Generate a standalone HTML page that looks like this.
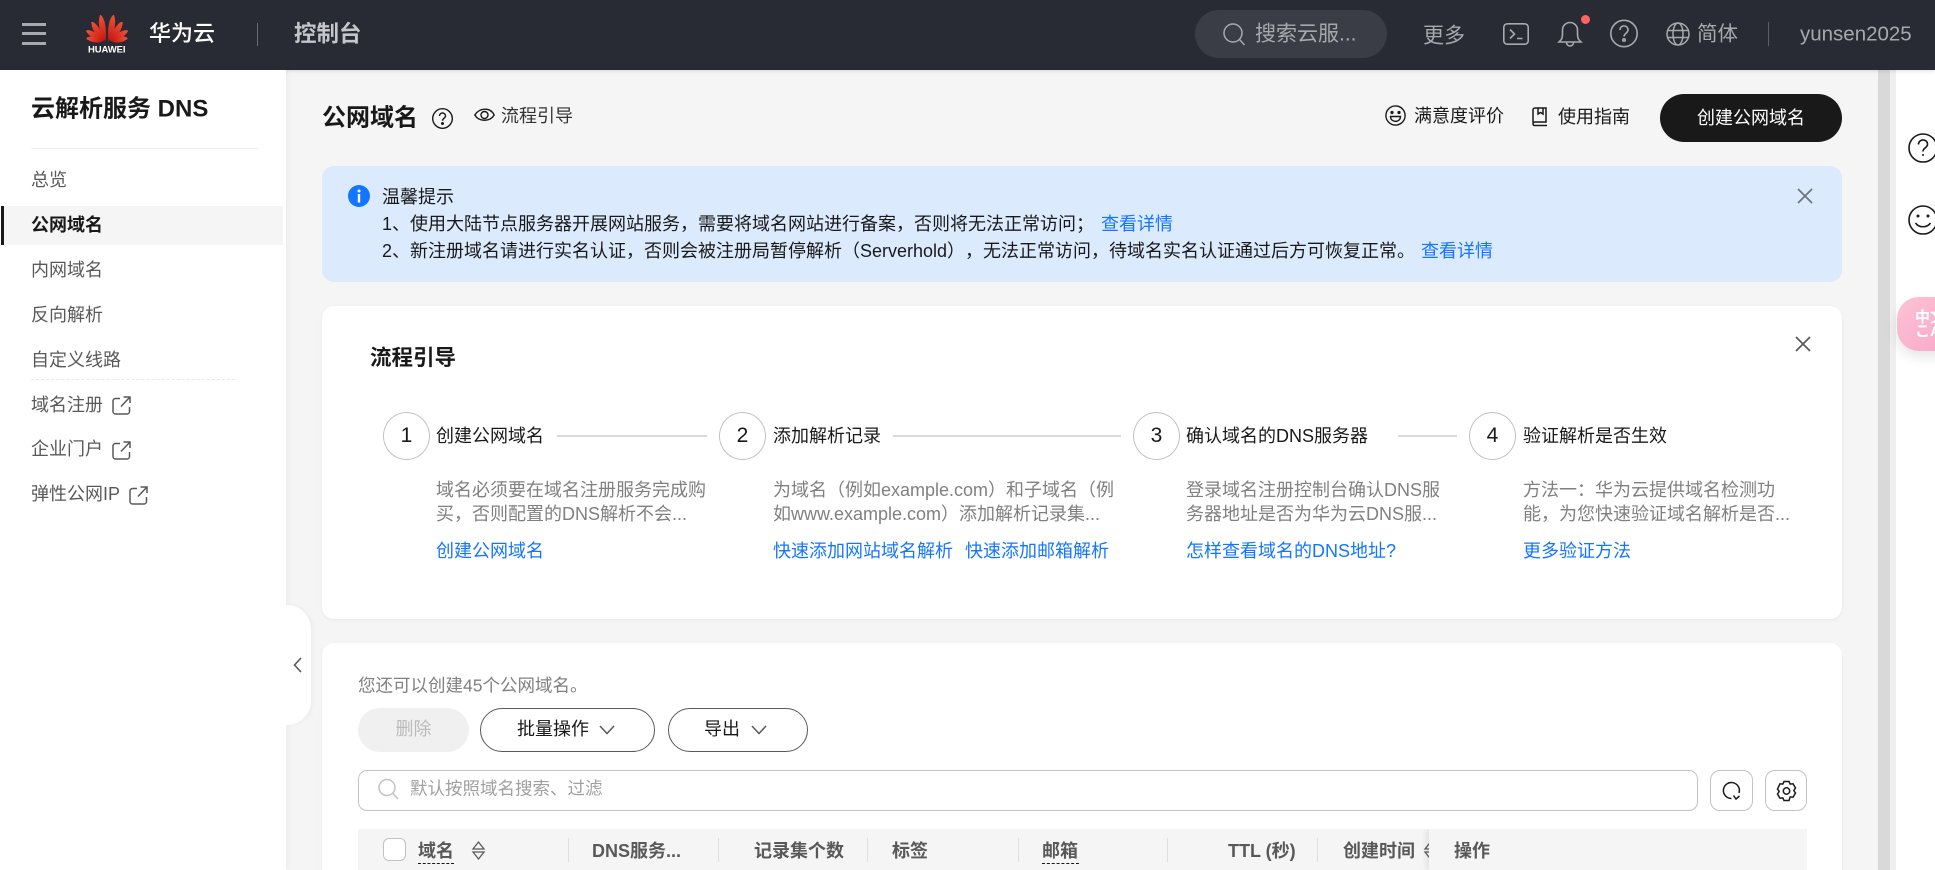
<!DOCTYPE html>
<html lang="zh-CN">
<head>
<meta charset="utf-8">
<title>公网域名</title>
<style>
html,body{margin:0;padding:0;width:1935px;height:870px;overflow:hidden;background:#f5f5f5}
body{position:relative;font-family:"Liberation Sans","Noto Sans CJK SC",sans-serif;color:#191919;font-size:18px;text-spacing-trim:space-all}
.b{position:absolute;box-sizing:border-box}
.t{position:absolute;white-space:nowrap;line-height:1.2;transform:translateY(-50%)}
.g{color:#595959}
.lk{color:#1476ff}
.d{color:#808080}
.bd{font-weight:700}
.hd{color:#595959;font-weight:700;font-size:18px}
svg{position:absolute;overflow:visible;fill:none}
.sep{position:absolute;top:838px;width:1px;height:24px;background:#dfdfdf}
.ln{position:absolute;top:435px;height:2px;background:#d9d9d9}
.c{position:absolute;top:412px;width:47px;height:48px;border:1px solid #c2c2c2;border-radius:50%;box-sizing:border-box;background:#fff;text-align:center;line-height:46px;font-size:21px;color:#191919}
</style>
</head>
<body>

<!-- main scrollbar + right rail -->
<div class="b" style="left:1878px;top:70px;width:12px;height:800px;background:#d9d9d9"></div>
<div class="b" style="left:1890px;top:70px;width:6px;height:800px;background:#efefef"></div>
<div class="b" style="left:1896px;top:70px;width:39px;height:800px;background:#fff"></div>
<svg style="left:1908px;top:133px" width="30" height="30" viewBox="0 0 30 30" stroke="#191919" stroke-width="1.6"><circle cx="15" cy="15" r="14"/><path d="M10.5 11.5c0-6 9-6 9 -.2 0 3.6-4.5 3.6-4.5 7.2"/><circle cx="15" cy="22" r="1" fill="#191919" stroke="none"/></svg>
<svg style="left:1908px;top:205px" width="30" height="30" viewBox="0 0 30 30" stroke="#191919" stroke-width="1.6"><circle cx="15" cy="15" r="14"/><circle cx="10" cy="11" r="1.5" fill="#191919" stroke="none"/><circle cx="20" cy="11" r="1.5" fill="#191919" stroke="none"/><path d="M7.5 18c3.5 5 11.500 5 15 0"/></svg>
<div class="b" style="left:1897px;top:297px;width:50px;height:54px;border-radius:22px 0 0 22px;background:linear-gradient(135deg,#fcc3d6,#f9a9c7);box-shadow:0 6px 12px rgba(0,0,0,.1);overflow:hidden">
  <div style="position:absolute;left:18px;top:14px;color:#fff;font-size:15px;line-height:14px;font-weight:700;white-space:nowrap">中文<br>こA</div>
</div>

<!-- header -->
<div class="b" style="left:0;top:0;width:1935px;height:70px;background:#282b33;box-shadow:0 1px 4px rgba(0,0,0,.12)"></div>
<div class="b" style="left:22px;top:23px;width:24px;height:3px;background:#a7a9ae"></div>
<div class="b" style="left:22px;top:32px;width:24px;height:3px;background:#a7a9ae"></div>
<div class="b" style="left:22px;top:42px;width:24px;height:3px;background:#a7a9ae"></div>
<svg style="left:88px;top:13px" width="38" height="30" viewBox="0 0 38 30">
  <defs><linearGradient id="p" x1="0" y1="0" x2="0" y2="1"><stop offset="0" stop-color="#f0523a"/><stop offset="1" stop-color="#c4160e"/></linearGradient></defs>
  <g fill="url(#p)">
    <path transform="translate(17.700 28) rotate(-9)" d="M0 0C-5-6-5.500-20-1.500-26.500 .5-27 4.500-18 0 0Z"/>
    <path transform="translate(20.300 28) rotate(9)" d="M0 0C-4.500-18-.5-27 1.500-26.500 5.500-20 5-6 0 0Z"/>
    <path transform="translate(16.500 28) rotate(-30)" d="M0 0C-5-5-5.500-16-2-23 .5-23.500 4-14 0 0Z"/>
    <path transform="translate(21.500 28) rotate(30)" d="M0 0C-4-14-.5-23.500 2-23 5.500-16 5-5 0 0Z"/>
    <path transform="translate(15.500 28) rotate(-52)" d="M0 0C-5-4-5.500-13-3-20 0-20.500 3.500-11 0 0Z"/>
    <path transform="translate(22.500 28) rotate(52)" d="M0 0C-3.500-11 0-20.500 3-20 5.500-13 5-4 0 0Z"/>
    <path transform="translate(14.500 28) rotate(-72)" d="M0 0C-4-3-5-10-3-16 0-16.500 3-9 0 0Z"/>
    <path transform="translate(23.500 28) rotate(72)" d="M0 0C-3-9 0-16.500 3-16 5-10 4-3 0 0Z"/>
  </g>
</svg>
<div class="t" style="left:88px;top:50px;color:#fff;font-size:9.500px;font-weight:700;letter-spacing:-.1px">HUAWEI</div>
<div class="t" style="left:149px;top:34px;color:#fff;font-size:22px;font-weight:500">华为云</div>
<div class="b" style="left:257px;top:23px;width:1px;height:23px;background:#6a6c73"></div>
<div class="t" style="left:294px;top:34px;color:#c4c6ca;font-size:22.500px;font-weight:700">控制台</div>

<div class="b" style="left:1195px;top:10px;width:192px;height:48px;border-radius:24px;background:#3a3d45"></div>
<svg style="left:1223px;top:23px" width="23" height="23" viewBox="0 0 23 23" stroke="#a7a9ae" stroke-width="1.500"><circle cx="10" cy="10" r="9"/><path d="M16.500 16.500L21.500 22"/></svg>
<div class="t" style="left:1255px;top:34px;color:#a7a9ae;font-size:21px">搜索云服...</div>
<div class="t" style="left:1423px;top:36px;color:#a7a9ae;font-size:21px">更多</div>
<svg style="left:1503px;top:23px" width="26" height="22" viewBox="0 0 26 22" stroke="#a7a9ae" stroke-width="1.600"><rect x=".8" y=".8" width="24.400" height="20.400" rx="3.500"/><path d="M7 6.500l4.500 4.500L7 15.500M14 15.500h5.500"/></svg>
<svg style="left:1558px;top:20px" width="24" height="28" viewBox="0 0 24 28" stroke="#a7a9ae" stroke-width="1.600"><path d="M1 22h22c-2-2-3.500-3-3.500-8V10a7.500 7.500 0 0 0-15 0v4c0 5-1.500 6-3.500 8Z"/><path d="M8.500 22.500a3.500 3.500 0 0 0 7 0"/></svg>
<div class="b" style="left:1581px;top:15px;width:9px;height:9px;border-radius:50%;background:#ff6464"></div>
<svg style="left:1610px;top:19px" width="28" height="29" viewBox="0 0 28 29" stroke="#a7a9ae" stroke-width="1.600"><circle cx="14" cy="14.500" r="13.200"/><path d="M10 11c0-5.500 8-5.500 8 0 0 3.200-4 3.200-4 6.500"/><circle cx="14" cy="21" r="1.200"/></svg>
<svg style="left:1666px;top:22px" width="24" height="24" viewBox="0 0 24 24" stroke="#a7a9ae" stroke-width="1.500"><circle cx="12" cy="12" r="11"/><ellipse cx="12" cy="12" rx="5" ry="11"/><path d="M1.500 8.500h21M1.500 15.500h21"/></svg>
<div class="t" style="left:1697px;top:35px;color:#a7a9ae;font-size:20.500px">简体</div>
<div class="b" style="left:1768px;top:22px;width:1px;height:24px;background:#5c5e65"></div>
<div class="t" style="left:1800px;top:35px;color:#a7a9ae;font-size:20.500px">yunsen2025</div>

<!-- sidebar -->
<div class="b" style="left:0;top:70px;width:286px;height:800px;background:#fff;box-shadow:2px 0 6px rgba(0,0,0,.04)"></div>
<div class="t bd" style="left:31px;top:110px;font-size:24px">云解析服务 DNS</div>
<div class="b" style="left:31px;top:148px;width:228px;height:1px;background:#eeeeee"></div>
<div class="t g" style="left:31px;top:181px;font-size:18px">总览</div>
<div class="b" style="left:3px;top:206px;width:280px;height:39px;background:#f5f5f5"></div>
<div class="b" style="left:1px;top:206px;width:3px;height:39px;background:#191919"></div>
<div class="t bd" style="left:31px;top:226px;font-size:18px">公网域名</div>
<div class="t g" style="left:31px;top:271px;font-size:18px">内网域名</div>
<div class="t g" style="left:31px;top:316px;font-size:18px">反向解析</div>
<div class="t g" style="left:31px;top:361px;font-size:18px">自定义线路</div>
<div class="b" style="left:31px;top:379px;width:204px;height:0;border-top:1px dashed #e8e8e8"></div>
<div class="t g" style="left:31px;top:406px;font-size:18px">域名注册</div>
<svg style="left:112px;top:396px" width="19" height="19" viewBox="0 0 19 19" stroke="#595959" stroke-width="1.500"><path d="M8 2.500H3.500a2.500 2.500 0 0 0-2.500 2.500V15.500a2.500 2.500 0 0 0 2.500 2.500H15a2.500 2.500 0 0 0 2.500-2.500V11M9 10.500L17.500 1.500M11.500 1h6.500v6"/></svg>
<div class="t g" style="left:31px;top:450px;font-size:18px">企业门户</div>
<svg style="left:112px;top:441px" width="19" height="19" viewBox="0 0 19 19" stroke="#595959" stroke-width="1.500"><path d="M8 2.500H3.500a2.500 2.500 0 0 0-2.500 2.500V15.500a2.500 2.500 0 0 0 2.500 2.500H15a2.500 2.500 0 0 0 2.500-2.500V11M9 10.500L17.500 1.500M11.500 1h6.500v6"/></svg>
<div class="t g" style="left:31px;top:495px;font-size:18px">弹性公网IP</div>
<svg style="left:129px;top:486px" width="19" height="19" viewBox="0 0 19 19" stroke="#595959" stroke-width="1.500"><path d="M8 2.500H3.500a2.500 2.500 0 0 0-2.500 2.500V15.500a2.500 2.500 0 0 0 2.500 2.500H15a2.500 2.500 0 0 0 2.500-2.500V11M9 10.500L17.500 1.500M11.500 1h6.500v6"/></svg>

<!-- collapse tab -->
<div class="b" style="left:286px;top:605px;width:25px;height:120px;background:#fff;border-radius:0 24px 24px 0;box-shadow:2px 0 4px rgba(0,0,0,.04)"></div>
<svg style="left:293px;top:657px" width="9" height="16" viewBox="0 0 9 16" stroke="#595959" stroke-width="1.600"><path d="M8 1L1.500 8 8 15"/></svg>

<!-- title row -->
<div class="t bd" style="left:322px;top:119px;font-size:24px">公网域名</div>
<svg style="left:432px;top:108px" width="21" height="21" viewBox="0 0 21 21" stroke="#191919" stroke-width="1.400"><circle cx="10.500" cy="10.500" r="9.800"/><path d="M7.500 8c0-4 6-4 6 0 0 2.300-3 2.300-3 4.700"/><circle cx="10.500" cy="15.500" r=".8" fill="#191919"/></svg>
<svg style="left:474px;top:107px" width="21" height="16" viewBox="0 0 21 16" stroke="#191919" stroke-width="1.400"><path d="M.8 8C5 1.300 16-.7 20.200 8 16 15 5 15 .8 8Z"/><circle cx="10.500" cy="8" r="3.500"/></svg>
<div class="t" style="left:501px;top:117px;font-size:18px;color:#333">流程引导</div>

<svg style="left:1385px;top:105px" width="21" height="21" viewBox="0 0 21 21" stroke="#191919" stroke-width="1.400"><circle cx="10.500" cy="10.500" r="9.600"/><path d="M5.500 11.500h10c0 6.500-10 6.500-10 0Z"/><circle cx="7" cy="7.500" r=".9" fill="#191919"/><circle cx="14" cy="7.500" r=".9" fill="#191919"/></svg>
<div class="t" style="left:1414px;top:117px;font-size:18px">满意度评价</div>
<svg style="left:1532px;top:107px" width="16" height="20" viewBox="0 0 16 20" stroke="#191919" stroke-width="1.500"><path d="M1 15.500V3a2 2 0 0 1 2-2h11v14H3a2 2 0 0 0-2 2 1.500 1.500 0 0 0 1.500 1.500H15"/><path d="M6 1v6l2.500-1.500L11 7V1"/></svg>
<div class="t" style="left:1558px;top:118px;font-size:18px">使用指南</div>
<div class="b" style="left:1660px;top:94px;width:182px;height:48px;border-radius:24px;background:#191919;color:#fff;text-align:center;line-height:48px;font-size:18px">创建公网域名</div>

<!-- alert -->
<div class="b" style="left:322px;top:166px;width:1520px;height:116px;border-radius:12px;background:#dceafe"></div>
<svg style="left:348px;top:185px" width="22" height="22" viewBox="0 0 22 22"><circle cx="11" cy="11" r="11" fill="#1476ff"/><rect x="9.800" y="9" width="2.400" height="8.500" fill="#fff"/><circle cx="11" cy="6" r="1.500" fill="#fff"/></svg>
<div class="t" style="left:382px;top:198px;font-size:18px">温馨提示</div>
<div class="t" style="left:382px;top:225px;font-size:18px">1、使用大陆节点服务器开展网站服务，需要将域名网站进行备案，否则将无法正常访问；</div>
<div class="t lk" style="left:1101px;top:225px;font-size:18px">查看详情</div>
<div class="t" style="left:382px;top:252px;font-size:18px">2、新注册域名请进行实名认证，否则会被注册局暂停解析（Serverhold），无法正常访问，待域名实名认证通过后方可恢复正常。</div>
<div class="t lk" style="left:1421px;top:252px;font-size:18px">查看详情</div>
<svg style="left:1797px;top:188px" width="16" height="16" viewBox="0 0 16 16" stroke="#6b7280" stroke-width="1.700"><path d="M1 1l14 14M15 1L1 15"/></svg>

<!-- guide card -->
<div class="b" style="left:322px;top:306px;width:1520px;height:313px;border-radius:12px;background:#fff;box-shadow:0 1px 3px rgba(0,0,0,.06)"></div>
<div class="t bd" style="left:370px;top:359px;font-size:21.500px">流程引导</div>
<svg style="left:1795px;top:336px" width="16" height="16" viewBox="0 0 16 16" stroke="#595959" stroke-width="1.700"><path d="M1 1l14 14M15 1L1 15"/></svg>

<div class="c" style="left:383px">1</div>
<div class="t" style="left:436px;top:437px;font-size:18px">创建公网域名</div>
<div class="ln" style="left:557px;width:150px"></div>
<div class="c" style="left:719px">2</div>
<div class="t" style="left:773px;top:437px;font-size:18px">添加解析记录</div>
<div class="ln" style="left:893px;width:228px"></div>
<div class="c" style="left:1133px">3</div>
<div class="t" style="left:1186px;top:437px;font-size:18px">确认域名的DNS服务器</div>
<div class="ln" style="left:1398px;width:59px"></div>
<div class="c" style="left:1469px">4</div>
<div class="t" style="left:1523px;top:437px;font-size:18px">验证解析是否生效</div>

<div class="t d" style="left:436px;top:491px;font-size:18px">域名必须要在域名注册服务完成购</div>
<div class="t d" style="left:436px;top:515px;font-size:18px">买，否则配置的DNS解析不会...</div>
<div class="t lk" style="left:436px;top:552px;font-size:18px">创建公网域名</div>

<div class="t d" style="left:773px;top:491px;font-size:18px">为域名（例如example.com）和子域名（例</div>
<div class="t d" style="left:773px;top:515px;font-size:18px">如www.example.com）添加解析记录集...</div>
<div class="t lk" style="left:773px;top:552px;font-size:18px">快速添加网站域名解析</div>
<div class="t lk" style="left:965px;top:552px;font-size:18px">快速添加邮箱解析</div>

<div class="t d" style="left:1186px;top:491px;font-size:18px">登录域名注册控制台确认DNS服</div>
<div class="t d" style="left:1186px;top:515px;font-size:18px">务器地址是否为华为云DNS服...</div>
<div class="t lk" style="left:1186px;top:552px;font-size:18px">怎样查看域名的DNS地址?</div>

<div class="t d" style="left:1523px;top:491px;font-size:18px">方法一：华为云提供域名检测功</div>
<div class="t d" style="left:1523px;top:515px;font-size:18px">能，为您快速验证域名解析是否...</div>
<div class="t lk" style="left:1523px;top:552px;font-size:18px">更多验证方法</div>

<!-- table card -->
<div class="b" style="left:322px;top:643px;width:1520px;height:240px;border-radius:12px;background:#fff;box-shadow:0 1px 3px rgba(0,0,0,.05)"></div>
<div class="t d" style="left:358px;top:686px;font-size:17.500px">您还可以创建45个公网域名。</div>

<div class="b" style="left:358px;top:708px;width:111px;height:44px;border-radius:22px;background:#f0f0f0;color:#bbbbbb;text-align:center;line-height:43px;font-size:18px">删除</div>
<div class="b" style="left:480px;top:708px;width:175px;height:44px;border-radius:22px;border:1px solid #595959;background:#fff"></div>
<div class="t" style="left:517px;top:730px;font-size:18px">批量操作</div>
<svg style="left:599px;top:725px" width="16" height="10" viewBox="0 0 16 10" stroke="#595959" stroke-width="1.500"><path d="M1 1l7 7.500L15 1"/></svg>
<div class="b" style="left:668px;top:708px;width:140px;height:44px;border-radius:22px;border:1px solid #595959;background:#fff"></div>
<div class="t" style="left:704px;top:730px;font-size:18px">导出</div>
<svg style="left:751px;top:725px" width="16" height="10" viewBox="0 0 16 10" stroke="#595959" stroke-width="1.500"><path d="M1 1l7 7.500L15 1"/></svg>

<div class="b" style="left:358px;top:770px;width:1340px;height:41px;border-radius:9px;border:1px solid #c2c2c2;background:#fff"></div>
<svg style="left:378px;top:778px" width="21" height="22" viewBox="0 0 21 22" stroke="#c2c2c2" stroke-width="1.500"><circle cx="9" cy="9.500" r="8"/><path d="M15 15.500l5 5.500"/></svg>
<div class="t" style="left:410px;top:789px;font-size:17.500px;color:#a0a0a0">默认按照域名搜索、过滤</div>
<div class="b" style="left:1710px;top:770px;width:43px;height:41px;border-radius:10px;border:1px solid #c2c2c2;background:#fff"></div>
<svg style="left:1721px;top:780px" width="21" height="22" viewBox="0 0 21 22" stroke="#191919" stroke-width="1.500"><path d="M10.500 18.500A8 8 0 1 1 18 13"/><path d="M12.500 15.500l2.500 3.500 3.500-3"/></svg>
<div class="b" style="left:1765px;top:770px;width:42px;height:41px;border-radius:10px;border:1px solid #c2c2c2;background:#fff"></div>
<svg style="left:1776px;top:780px" width="21" height="22" viewBox="0 0 21 22" stroke="#191919" stroke-width="1.500"><path d="M8 1.500h5l1.200 2.600 2.800-.3 2.500 4.200-1.700 2.500 1.700 2.500-2.500 4.200-2.800-.3L13 20.500H8l-1.200-2.600-2.800.3L1.500 14l1.700-2.500L1.500 9 4 3.800l2.800.3Z"/><circle cx="10.500" cy="11" r="3.200"/></svg>

<!-- table head -->
<div class="b" style="left:358px;top:829px;width:1449px;height:41px;background:#f5f5f5"></div>
<div class="b" style="left:383px;top:838px;width:23px;height:23px;border-radius:6px;border:1px solid #c2c2c2;background:#fff"></div>
<div class="t hd" style="left:418px;top:852px">域名</div>
<div class="b" style="left:418px;top:863px;width:36px;height:0;border-top:1px dashed #191919"></div>
<svg style="left:472px;top:841px" width="13" height="19" viewBox="0 0 13 19" stroke="#595959" stroke-width="1.300"><path d="M1 8L6.500 1 12 8ZM1 11l5.500 7L12 11Z"/></svg>
<div class="sep" style="left:568px"></div>
<div class="t hd" style="left:592px;top:852px">DNS服务...</div>
<div class="sep" style="left:718px"></div>
<div class="t hd" style="left:754px;top:852px">记录集个数</div>
<div class="sep" style="left:867px"></div>
<div class="t hd" style="left:892px;top:852px">标签</div>
<div class="sep" style="left:1018px"></div>
<div class="t hd" style="left:1042px;top:852px">邮箱</div>
<div class="b" style="left:1042px;top:863px;width:37px;height:0;border-top:1px dashed #191919"></div>
<div class="sep" style="left:1167px"></div>
<div class="t hd" style="left:1228px;top:852px">TTL (秒)</div>
<div class="sep" style="left:1317px"></div>
<div class="t hd" style="left:1343px;top:852px">创建时间</div>
<svg style="left:1424px;top:841px" width="13" height="19" viewBox="0 0 13 19" stroke="#595959" stroke-width="1.300"><path d="M1 8L6.500 1 12 8ZM1 11l5.500 7L12 11Z"/></svg>
<div class="b" style="left:1429px;top:829px;width:378px;height:41px;background:#f5f5f5;box-shadow:-3px 0 5px rgba(0,0,0,.07);clip-path:inset(0 0 0 -10px)"></div>
<div class="t hd" style="left:1454px;top:852px">操作</div>

</body>
</html>
